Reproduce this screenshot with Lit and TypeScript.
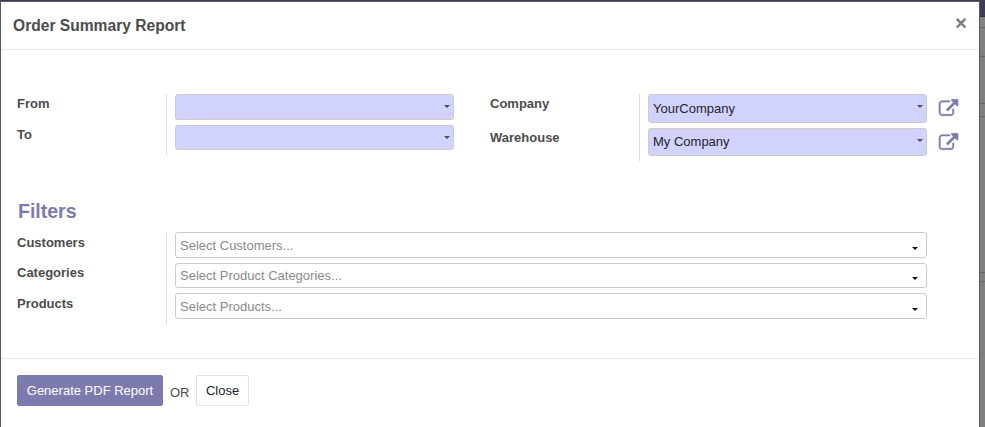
import { LitElement, html, css, svg } from "lit";
import { customElement, property } from "lit/decorators.js";

const linkIcon = html`<svg class="icon" viewBox="0 0 1792 1536">${svg`<path fill="currentColor" stroke="currentColor" stroke-width="50" d="M1408 928v320q0 119-84.5 203.5t-203.5 84.5h-832q-119 0-203.5-84.5t-84.5-203.5v-832q0-119 84.5-203.5t203.5-84.5h704q14 0 23 9t9 23v64q0 14-9 23t-23 9h-704q-66 0-113 47t-47 113v832q0 66 47 113t113 47h832q66 0 113-47t47-113v-320q0-14 9-23t23-9h64q14 0 23 9t9 23zm384-864v512q0 26-19 45t-45 19-45-19l-176-176-652 652q-10 10-23 10t-23-10l-114-114q-10-10-10-23t10-23l652-652-176-176q-19-19-19-45t19-45 45-19h512q26 0 45 19t19 45z"/>`}</svg>`;

@customElement("select-field")
class SelectField extends LitElement {
  @property() value = "";
  @property() placeholder = "";
  static styles = css`
    :host {
      display: flex;
      box-sizing: border-box;
      align-items: flex-start;
      justify-content: space-between;
      border: 1px solid #ccc;
      border-radius: 3px;
      padding: 0 3px 0 4px;
      color: #212529;
      background: #d2d2ff;
    }
    :host([placeholder]) {
      background: #fff;
      color: #8a8a8a;
      padding-right: 8px;
    }
    .caret {
      border: 3px solid transparent;
      border-top-color: #4c4c4c;
      border-bottom: 0;
      margin-top: 10px;
    }
    :host([placeholder]) .caret {
      border-top-color: #111;
      margin-top: var(--caret-top, 14px);
    }
    .text {
      line-height: 20px;
      padding-top: var(--text-top, 3px);
    }
  `;
  render() {
    return html`<span class="text">${this.value || this.placeholder}</span><span class="caret"></span>`;
  }
}

@customElement("app-root")
class AppRoot extends LitElement {
  static styles = css`
    :host {
      display: block;
      position: relative;
      height: 427px;
      overflow: hidden;
      font: 13px/20px "Liberation Sans", Arial, sans-serif;
      color: #4c4c4c;
      background: #808080;
    }
    .nav {
      height: 16px;
      background: #3e3d55;
      border-bottom: 1px solid #2d2c42;
    }
    .band {
      box-sizing: border-box;
      border-bottom: 1px solid #666;
    }
    .b1 { height: 11px; background: #838383; }
    .b2 { height: 29px; }
    .b3 { height: 47px; }
    .b4 { height: 13px; }
    .b5 { height: 156px; }
    .b6 { height: 9px; }
    .modal {
      position: absolute;
      inset: 2px 6px 0 1px;
      background: #fff;
      box-shadow: 0 0 0 1px #5c5c60;
      display: flex;
      flex-direction: column;
    }
    .header {
      height: 47px;
      border-bottom: 1px solid #e9e9e9;
      display: flex;
      justify-content: space-between;
      align-items: center;
      padding: 0 12px;
    }
    .title { font-size: 15.6px; font-weight: bold; }
    .x { font-size: 20.5px; font-weight: bold; color: #7a7a7a; margin-top: -6px; }
    .body {
      height: 308px;
      border-bottom: 1px solid #e9e9e9;
    }
    .row { display: flex; height: 99px; padding: 44px 0 0 16px; }
    .group { display: flex; }
    .left { width: 473px; }
    .labels {
      width: 149px;
      border-right: 1px solid #ddd;
      font-weight: bold;
      margin-right: 8px;
    }
    .left .labels { height: 61px; }
    .right .labels { height: 67px; }
    .lab { height: 31px; }
    .right .lab { height: 34px; }
    .fields { display: flex; flex-direction: column; width: 279px; }
    .f26 { height: 26px; margin-bottom: 5px; }
    .f25 { height: 25px; margin-bottom: 5px; --text-top: 2px; --caret-top: 13px; }
    .f29 { height: 29px; margin-bottom: 5px; --text-top: 4px; }
    .f28 { height: 28px; }
    .icons { display: flex; flex-direction: column; padding: 5px 0 0 12px; gap: 17px; color: #7c7bad; }
    .icon { width: 19px; height: 17px; display: block; overflow: visible; }
    h2 {
      margin: 7px 0 10px 17px;
      font: bold 19.5px/22px "Liberation Sans", Arial, sans-serif;
      color: #7c7bad;
    }
    .filters { display: flex; padding-left: 16px; }
    .filters .labels { box-sizing: border-box; width: 150px; height: 92px; padding-top: 1px; }
    .filters .lab { height: 30px; }
    .filters .lab:nth-child(2) { height: 31px; }
    .filters .fields { width: 752px; }
    .footer { display: flex; padding: 16px 16px 0; }
    .btn {
      box-sizing: border-box;
      height: 31px;
      border: 1px solid #7c7bad;
      border-radius: 2px;
      background: #7c7bad;
      color: #fff;
      font: 13px/29px "Liberation Sans", Arial, sans-serif;
      padding: 0;
      white-space: nowrap;
    }
    .primary { width: 146px; }
    .secondary { width: 53px; background: #fff; border-color: #dee2e6; color: #212529; }
    .or { width: 19px; margin: 8px 7px 0; }
  `;
  render() {
    return html`
      <div class="nav"></div>
      ${[1, 2, 3, 4, 5, 6].map((n) => html`<div class="band b${n}"></div>`)}
      <div class="modal">
        <div class="header"><span class="title">Order Summary Report</span><span class="x">×</span></div>
        <div class="body">
          <div class="row">
            <div class="group left">
              <div class="labels"><div class="lab">From</div><div class="lab">To</div></div>
              <div class="fields">
                <select-field class="f26"></select-field>
                <select-field class="f25"></select-field>
              </div>
            </div>
            <div class="group right">
              <div class="labels"><div class="lab">Company</div><div class="lab">Warehouse</div></div>
              <div class="fields">
                <select-field class="f29" value="YourCompany"></select-field>
                <select-field class="f28" value="My Company"></select-field>
              </div>
              <div class="icons">${linkIcon}${linkIcon}</div>
            </div>
          </div>
          <h2>Filters</h2>
          <div class="filters">
            <div class="labels"><div class="lab">Customers</div><div class="lab">Categories</div><div class="lab">Products</div></div>
            <div class="fields">
              <select-field class="f26" placeholder="Select Customers..."></select-field>
              <select-field class="f25" placeholder="Select Product Categories..."></select-field>
              <select-field class="f26" placeholder="Select Products..."></select-field>
            </div>
          </div>
        </div>
        <div class="footer">
          <button class="btn primary">Generate PDF Report</button><span class="or">OR</span><button class="btn secondary">Close</button>
        </div>
      </div>
    `;
  }
}
